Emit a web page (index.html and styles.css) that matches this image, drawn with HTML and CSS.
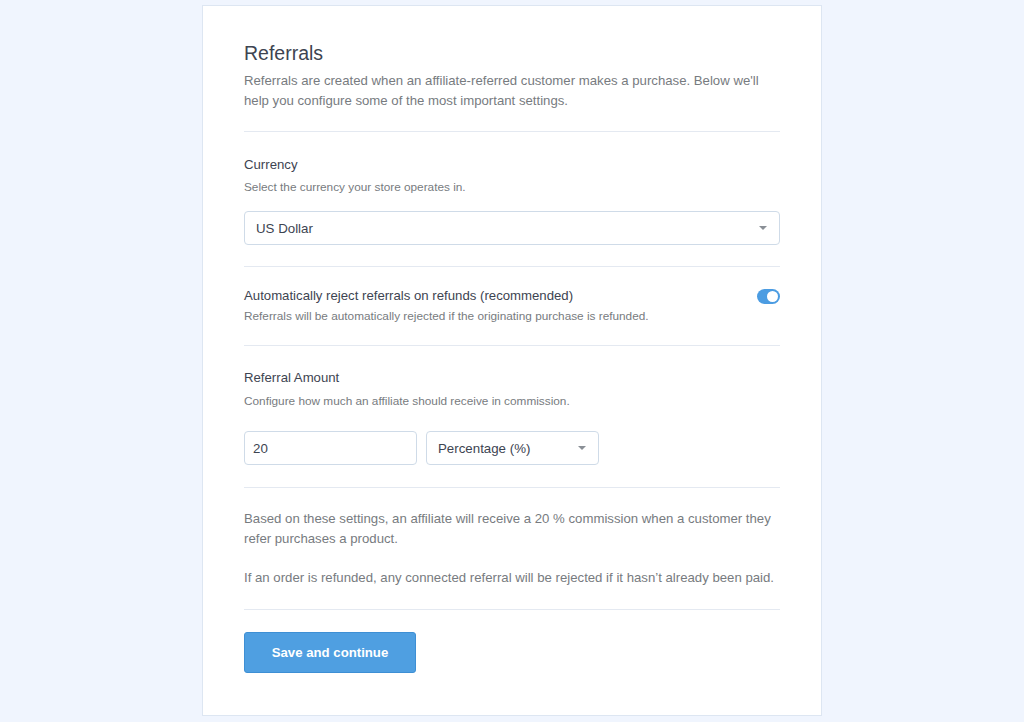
FILE: index.html
```html
<!DOCTYPE html>
<html>
<head>
<meta charset="utf-8">
<link rel="stylesheet" href="styles.css">
</head>
<body>
<div class="card">
  <div class="section header">
    <h1 class="title">Referrals</h1>
    <p class="lead">Referrals are created when an affiliate-referred customer makes a purchase. Below we'll help you configure some of the most important settings.</p>
  </div>

  <div class="section currency">
    <div class="label">Currency</div>
    <div class="hint">Select the currency your store operates in.</div>
    <div class="select full">
      <span>US Dollar</span>
      <span class="caret"></span>
    </div>
  </div>

  <div class="section toggle-section">
    <div class="toggle-row">
      <div class="label">Automatically reject referrals on refunds (recommended)</div>
      <div class="toggle"><span class="knob"></span></div>
    </div>
    <div class="hint">Referrals will be automatically rejected if the originating purchase is refunded.</div>
  </div>

  <div class="section amount">
    <div class="label">Referral Amount</div>
    <div class="hint">Configure how much an affiliate should receive in commission.</div>
    <div class="amount-row">
      <div class="input">20</div>
      <div class="select small">
        <span>Percentage (%)</span>
        <span class="caret"></span>
      </div>
    </div>
  </div>

  <div class="section summary">
    <p>Based on these settings, an affiliate will receive a 20 % commission when a customer they refer purchases a product.</p>
    <p>If an order is refunded, any connected referral will be rejected if it hasn’t already been paid.</p>
  </div>

  <div class="actions">
    <button class="btn">Save and continue</button>
  </div>
</div>
</body>
</html>
```

FILE: styles.css
```css
* { box-sizing: border-box; }
html, body { margin: 0; padding: 0; }
body {
  background: #f0f5fe;
  font-family: "Liberation Sans", Arial, sans-serif;
  color: #3d4451;
}
.card {
  width: 620px;
  height: 711px;
  margin: 5px 0 0 202px;
  background: #fff;
  border: 1px solid #dde6f2;
  padding: 35px 41px 0 41px;
}
.section {
  border-bottom: 1px solid #e4e9f1;
}
.header { padding-bottom: 20px; }
.title {
  margin: 0;
  font-size: 19.5px;
  line-height: 24px;
  font-weight: normal;
  color: #3d4451;
}
.lead {
  margin: 6px 0 0 0;
  font-size: 13.2px;
  line-height: 20px;
  color: #777b80;
}
.label {
  font-size: 13.2px;
  line-height: 20px;
  color: #3d4451;
}
.hint {
  font-size: 11.8px;
  line-height: 18px;
  color: #777b80;
  margin-top: 4px;
}
.currency { padding: 23px 0 21px; }
.currency .hint { margin-top: 3px; }
.select {
  height: 34px;
  border: 1px solid #cfdbe8;
  border-radius: 4px;
  display: flex;
  align-items: center;
  justify-content: space-between;
  padding: 0 12px 0 11px;
  font-size: 13.3px;
  color: #3d4451;
  margin-top: 15px;
}
.caret {
  width: 0;
  height: 0;
  border-left: 4px solid transparent;
  border-right: 4px solid transparent;
  border-top: 4px solid #8a8f96;
}
.toggle-section { padding: 19px 0 20px; }
.toggle-row {
  display: flex;
  justify-content: space-between;
  align-items: center;
}
.toggle-section .hint { margin-top: 1px; }
.toggle {
  width: 23px;
  height: 15px;
  border-radius: 8px;
  background: #4b9ce2;
  position: relative;
}
.knob {
  position: absolute;
  right: 2px;
  top: 2px;
  width: 11px;
  height: 11px;
  border-radius: 50%;
  background: #fff;
}
.amount { padding: 22px 0 22px; }
.amount-row {
  display: flex;
  gap: 9px;
  margin-top: 21px;
}
.input {
  width: 173px;
  height: 34px;
  border: 1px solid #cfdbe8;
  border-radius: 4px;
  font-size: 13.3px;
  color: #3d4451;
  padding: 0 8px;
  display: flex;
  align-items: center;
}
.select.small {
  width: 173px;
  margin-top: 0;
  padding: 0 12px 0 11px;
}
.summary { padding: 21px 0 21px; }
.summary p {
  margin: 0;
  font-size: 13.2px;
  line-height: 20px;
  color: #777b80;
}
.summary p + p { margin-top: 19px; }
.actions { padding-top: 22px; }
.btn {
  width: 172px;
  height: 41px;
  background: #4f9fe1;
  border: 1px solid #3e8fd4;
  border-radius: 3px;
  color: #fff;
  font-family: "Liberation Sans", Arial, sans-serif;
  font-size: 13.2px;
  font-weight: bold;
  cursor: pointer;
}
```
